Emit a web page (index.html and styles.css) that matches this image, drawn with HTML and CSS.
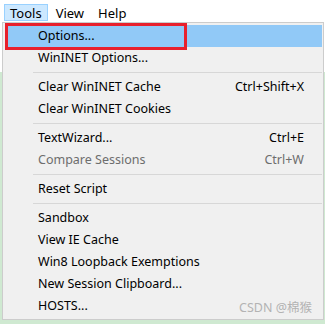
FILE: index.html
```html
<!DOCTYPE html>
<html>
<head>
<meta charset="utf-8">
<link rel="stylesheet" href="styles.css">
</head>
<body>
<div class="screen">
  <div class="menubar">
    <span class="mb-item active">Tools</span>
    <span class="mb-item">View</span>
    <span class="mb-item">Help</span>
  </div>
  <div class="desk">
    <div class="dropdown">
      <div class="item hl"><span class="label">Options...</span></div>
      <div class="item"><span class="label">WinINET Options...</span></div>
      <div class="sep"></div>
      <div class="item"><span class="label">Clear WinINET Cache</span><span class="key">Ctrl+Shift+X</span></div>
      <div class="item"><span class="label">Clear WinINET Cookies</span></div>
      <div class="sep"></div>
      <div class="item"><span class="label">TextWizard...</span><span class="key">Ctrl+E</span></div>
      <div class="item disabled"><span class="label">Compare Sessions</span><span class="key">Ctrl+W</span></div>
      <div class="sep"></div>
      <div class="item"><span class="label">Reset Script</span></div>
      <div class="sep"></div>
      <div class="item"><span class="label">Sandbox</span></div>
      <div class="item"><span class="label">View IE Cache</span></div>
      <div class="item"><span class="label">Win8 Loopback Exemptions</span></div>
      <div class="item"><span class="label">New Session Clipboard...</span></div>
      <div class="item"><span class="label">HOSTS...</span><span class="watermark">CSDN @棉猴</span></div>
    </div>
  </div>
  <div class="callout"></div>
</div>
</body>
</html>
```

FILE: styles.css
```css
html, body {
  margin: 0;
  padding: 0;
}
body {
  width: 325px;
  height: 324px;
  overflow: hidden;
  background: #ffffff;
  font-family: "Noto Sans", "Noto Sans CJK SC", sans-serif;
  color: #000;
}
.screen {
  position: relative;
  width: 325px;
  height: 324px;
  display: flex;
  flex-direction: column;
}
.menubar {
  height: 22px;
  box-sizing: border-box;
  padding: 4px 0 0 4px;
  display: flex;
  align-items: flex-start;
  background: #ffffff;
}
.mb-item {
  height: 17px;
  line-height: 16px;
  padding: 0 5px;
  font-size: 13px;
  border: 1px solid transparent;
  box-sizing: border-box;
  margin-right: 2px;
}
.mb-item.active {
  background: #cce8ff;
  border-color: #99d1ff;
}
.desk {
  flex: 1;
  background: linear-gradient(#ffffff 0 50px, #cfe9d1 50px);
  display: flex;
  flex-direction: column;
}
.dropdown {
  margin-left: 2px;
  width: 322px;
  height: 298px;
  box-sizing: border-box;
  border: 1px solid #cccccc;
  background: #f0f0f0;
  padding: 2px 1px 2px 2px;
  display: flex;
  flex-direction: column;
  position: relative;
}
.item {
  height: 22px;
  line-height: 22px;
  font-size: 12.5px;
  padding: 0 18px 0 33px;
  display: flex;
  justify-content: space-between;
  white-space: nowrap;
  flex: none;
}
.item.hl {
  background: #91c9f7;
}
.item.disabled {
  color: #6d6d6d;
}
.key {
  font-size: 12.5px;
}
.sep {
  height: 7px;
  flex: none;
  margin-left: 28px;
  position: relative;
}
.sep::after {
  content: "";
  position: absolute;
  left: 0;
  right: 0;
  top: 3px;
  height: 1px;
  background: #d7d7d7;
}
.watermark {
  color: #b3b3b3;
  font-size: 12.5px;
  margin-right: -8px;
  position: relative;
  top: 2px;
}
.callout {
  position: absolute;
  left: 5px;
  top: 23px;
  width: 182px;
  height: 27px;
  box-sizing: border-box;
  border: 3px solid #e8202c;
}
```
